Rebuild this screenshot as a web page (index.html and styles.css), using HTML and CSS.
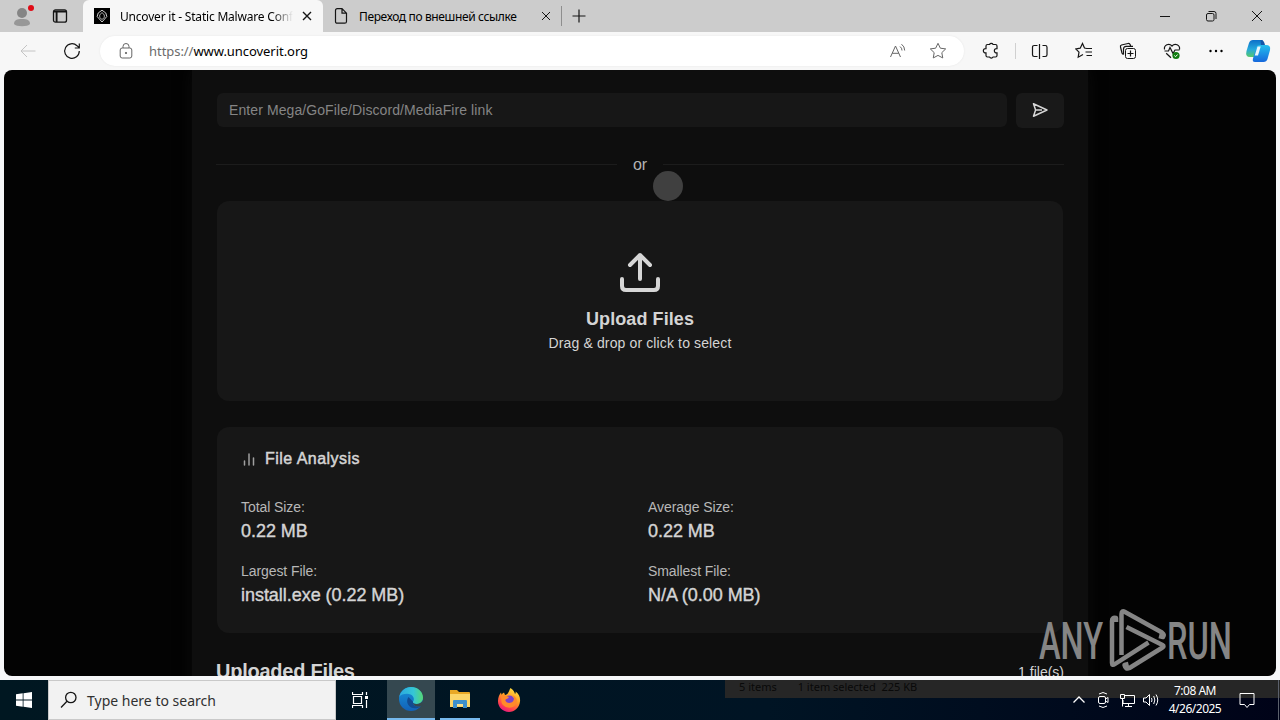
FILE: index.html
```
<!DOCTYPE html>
<html lang="en">
<head>
    <meta charset="UTF-8">
    <meta name="viewport" content="width=device-width, initial-scale=1.0">
    <title>Uncover it - Static Malware Config</title>
    <link rel="stylesheet" href="styles.css">
</head>
<body>
    <!-- browser tabs -->
    <div class="tabbar">
        <div class="tab-tools">
            <svg class="avatar" width="24" height="28" viewBox="0 0 24 28">
                <circle cx="11" cy="13" r="5" fill="#858585"/>
                <path d="M3 24c0-4 3-5 8-5s8 1 8 5c-2 3-14 3-16 0z" fill="#979797"/>
                <circle cx="20" cy="8" r="3" fill="#e00b16"/>
            </svg>
            <svg width="16" height="16" viewBox="0 0 16 16" class="line">
                <rect x="1.500" y="1.800" width="13" height="12.400" rx="2" stroke-width="1.300"/>
                <path d="M2 3.500h12M4.600 4v10" stroke-width="1.900"/>
            </svg>
        </div>
        <div class="tab active">
            <svg width="16" height="16" viewBox="0 0 16 16">
                <rect width="16" height="16" fill="#000"/>
                <path d="M8 2.200L11.800 5l1 3.500L8 14 3.200 8.500 4.200 5z" fill="none" stroke="#ccc"/>
                <path d="M8 4.500l2.300 2.500v2.500L8 11.500 5.700 9.500V7z" fill="none" stroke="#aaa"/>
            </svg>
            <span class="tab-title">Uncover it - Static Malware Config</span>
            <svg width="10" height="10" viewBox="0 0 10 10" class="line"><path d="M1 1l8 8M9 1L1 9" stroke-width="1.400"/></svg>
        </div>
        <div class="tab">
            <svg width="14" height="16" viewBox="0 0 14 16" class="line"><path d="M1.500 2.500q0-1.800 1.800-1.800H8l4.500 4.500v8.200q0 1.800-1.800 1.800H3.300q-1.800 0-1.800-1.800zM8 .7v4.500h4.500" stroke-width="1.200"/></svg>
            <span class="tab-title cyr">Переход по внешней ссылке</span>
            <svg width="10" height="10" viewBox="0 0 10 10" class="line"><path d="M1 1l8 8M9 1L1 9"/></svg>
        </div>
        <div class="new-tab">
            <svg width="14" height="14" viewBox="0 0 14 14" class="line"><path d="M7 .5v13M.5 7h13" stroke-width="1.200"/></svg>
        </div>
        <div class="win-buttons">
            <svg width="46" height="32" viewBox="0 0 46 32" class="line"><path d="M18 16.500h10"/></svg>
            <svg width="46" height="32" viewBox="0 0 46 32" class="line"><rect x="18.500" y="13.500" width="7.500" height="7.500" rx="1.500"/><path d="M20.500 11.500h5.500q2 0 2 2v5.500"/></svg>
            <svg width="46" height="32" viewBox="0 0 46 32" class="line"><path d="M18 11l10 10M28 11L18 21"/></svg>
        </div>
    </div>

    <!-- address bar -->
    <div class="toolbar">
        <div class="nav">
            <svg width="16" height="16" viewBox="0 0 16 16" class="line faded"><path d="M15.500 8H1M7 2L1 8l6 6"/></svg>
            <svg width="18" height="18" viewBox="0 0 18 18" class="line"><path d="M16.300 9a7.300 7.300 0 1 1-2.300-5.300l2 2M16.300 1.500v4.500h-4.500" stroke-width="1.200"/></svg>
        </div>
        <div class="address">
            <svg width="14" height="16" viewBox="0 0 14 16" class="line grey"><rect x="1.200" y="5" width="11.600" height="10" rx="2"/><path d="M4 5V3.500a3 3 0 0 1 6 0V5"/><circle cx="7" cy="10" r=".7" fill="#666"/></svg>
            <span class="url"><span class="scheme">https://</span>www.uncoverit.org</span>
            <svg width="18" height="16" viewBox="0 0 18 16" class="line grey"><path d="M1.500 14L6.500 3l5 11M3.200 10.300h6.600M11 3.500q2 1.500 2 4M12.500 1.200q3.200 2.300 3.200 6.300"/></svg>
            <svg width="18" height="18" viewBox="0 0 18 18" class="line grey star"><path d="M9 1.300l2.350 4.900 5.350.7-3.900 3.750.95 5.300L9 13.400l-4.750 2.550.95-5.300L1.300 6.900l5.350-.7z"/></svg>
        </div>
        <div class="actions">
            <svg class="puzzle" width="18" height="18" viewBox="0 0 18 18" class="line"><path d="M5.500 2.500h2a2 2 0 0 1 3.600 0h2.400q1.500 0 1.500 1.500v2.600a2.200 2.200 0 1 0 0 4.300v2.600q0 1.500-1.500 1.500h-2.400a2 2 0 0 1-3.600 0h-2Q4 15 4 13.500v-2.600a2.200 2.200 0 1 1 0-4.300V4q0-1.500 1.500-1.500z"/></svg>
            <span class="separator"></span>
            <svg width="18" height="18" viewBox="0 0 18 18" class="line"><path d="M6.500 3.500H3.200q-1.700 0-1.700 1.700v7.600q0 1.700 1.700 1.700h3.300M8.500 2v15M11.500 3.500h2.800q1.700 0 1.700 1.700v7.600q0 1.700-1.700 1.700h-2.800" stroke-width="1.200"/></svg>
            <svg width="18" height="18" viewBox="0 0 18 18" class="line"><path d="M11.800 6.500L9.500 6 7.500 1.500 5.200 6.200l-4.400.7L4 10.200l-.8 5L8 12.500M11.500 6.500h5.500M10.500 10H17M11.500 13.500H17" stroke-width="1.200"/></svg>
            <svg width="18" height="18" viewBox="0 0 18 18" class="line"><rect x="6.500" y="6.500" width="10" height="10" rx="2"/><path d="M4.500 12.500Q3.300 12 3 11L1.500 5Q1 3.500 2.500 3L9 1.500q1.600-.3 2.200 1.200l.6 1.700M4.500 12.500V7q0-2.600 2.600-2.600H14M11.500 8.500v6M8.500 11.500h6" stroke-width="1.200"/></svg>
            <svg width="18" height="18" viewBox="0 0 18 18" class="line"><path d="M1.500 7.500C.7 3 6 .5 9 4c3-3.500 8.300-1 7.500 3.500M1.500 9h4l1.500-3.500 3 6L12 8h4.500M3.200 11.200L8 15.800" stroke-width="1.200"/><circle cx="13" cy="13.500" r="3.600" fill="#107c10" stroke="none"/><path d="M11.300 13.500l1.300 1.200 2-2.200" stroke="#fff"/></svg>
            <svg width="18" height="18" viewBox="0 0 18 18"><circle cx="3.500" cy="9" r="1.200"/><circle cx="9" cy="9" r="1.200"/><circle cx="14.500" cy="9" r="1.200"/></svg>
        </div>
        <svg class="copilot" width="26" height="24" viewBox="0 0 26 24">
            <defs>
                <linearGradient id="cop1" x1="0" y1="0" x2="0" y2="1"><stop offset="0" stop-color="#0c6fc9"/><stop offset=".55" stop-color="#26a9dc"/><stop offset="1" stop-color="#56c96b"/></linearGradient>
                <linearGradient id="cop2" x1="0" y1="0" x2="0" y2="1"><stop offset="0" stop-color="#22bfee"/><stop offset="1" stop-color="#1668dc"/></linearGradient>
            </defs>
            <path d="M8 1h8.500Q19 1 18 4l-3.500 11q-1 3-4 3H5Q0 18 1.500 12L4 4q1-3 4-3z" fill="url(#cop1)"/>
            <path d="M15 6h6q5 0 4 5l-2.500 9q-1 3-4 3H10q-3 0-2-3.500L11 9q1-3 4-3z" fill="url(#cop2)"/>
            <path d="M12.500 7.500h3.200L13 16.500H9.700z" fill="#e9f5fb"/>
            <path d="M15.500 1Q19 1 20 6h-4z" fill="#1256a8"/>
        </svg>
    </div>

    <!-- web page -->
    <div class="viewport">
        <div class="container">
            <div class="link-row">
                <input class="link-input" type="text" placeholder="Enter Mega/GoFile/Discord/MediaFire link">
                <button class="send">
                    <svg width="16" height="16" viewBox="0 0 16 16"><path d="M1.500 1.800L15 8 1.500 14.200 3.600 8zM3.600 8H10" fill="none" stroke="#d6d6d6" stroke-width="1.500" stroke-linejoin="round"/></svg>
                </button>
            </div>

            <div class="or">or</div>

            <div class="upload">
                <svg width="48" height="48" viewBox="0 0 48 48"><path d="M24 30V6M14 16L24 6l10 10M6 30v7q0 4 4 4h28q4 0 4-4v-7" fill="none" stroke="#d6d6d6" stroke-width="4" stroke-linecap="round" stroke-linejoin="round"/></svg>
                <div class="upload-title">Upload Files</div>
                <div class="upload-hint">Drag &amp; drop or click to select</div>
            </div>

            <div class="analysis">
                <div class="analysis-title">
                    <svg width="16" height="16" viewBox="0 0 16 16"><path d="M3.500 14V10M8 14V3M12.500 14V7" stroke="#a0a0a0" stroke-width="1.500" stroke-linecap="round"/></svg>
                    File Analysis
                </div>
                <div class="stats">
                    <div><div class="label">Total Size:</div><div class="value">0.22 MB</div></div>
                    <div><div class="label">Average Size:</div><div class="value">0.22 MB</div></div>
                    <div><div class="label">Largest File:</div><div class="value">install.exe (0.22 MB)</div></div>
                    <div><div class="label">Smallest File:</div><div class="value">N/A (0.00 MB)</div></div>
                </div>
            </div>

            <div class="files-head">
                <span class="files-title">Uploaded Files</span>
                <span class="files-count">1 file(s)</span>
            </div>
        </div>
    </div>

    <!-- windows taskbar -->
    <div class="taskbar">
        <div class="start">
            <svg width="16" height="16" viewBox="0 0 16 16"><path d="M0 2.300L6.700 1.300V7.600H0zM7.500 1.200L16 0v7.600H7.500zM0 8.400h6.700v6.300L0 13.700zM7.500 8.400H16V16l-8.500-1.200z" fill="#fff"/></svg>
        </div>
        <div class="search">
            <svg width="18" height="18" viewBox="0 0 18 18" class="line"><circle cx="10.800" cy="6.500" r="5.200" stroke-width="1.300"/><path d="M7 10.300L1 16.500" stroke-width="1.300"/></svg>
            <span>Type here to search</span>
        </div>
        <div class="task-view">
            <svg width="16" height="16" viewBox="0 0 16 16" class="line white"><path d="M.5 0v2.500h10V0M.5 16v-2.500h10V16M1.500 4.500h8v7h-8zM14.500 0v3M14.500 8v8" stroke-width="1.200"/><path d="M13 5.500h3" stroke-width="3"/></svg>
        </div>
        <div class="app current">
            <svg width="24" height="24" viewBox="0 0 24 24">
                <defs>
                    <linearGradient id="edge1" x1="0" y1="0" x2="1" y2="0"><stop offset="0" stop-color="#2ba8e0"/><stop offset=".6" stop-color="#35c6d6"/><stop offset="1" stop-color="#56d774"/></linearGradient>
                    <linearGradient id="edge2" x1="0" y1="0" x2="0" y2="1"><stop offset="0" stop-color="#1793d9"/><stop offset="1" stop-color="#1261b8"/></linearGradient>
                </defs>
                <circle cx="12" cy="12" r="12" fill="url(#edge2)"/>
                <path d="M.2 10C1.500 4 6.500 0 12 0c7 0 12 5 12 10.500 0 4-3 6.500-6.500 6.500-2.500 0-4-1-3.500-2.200 2.500-3.500-.5-8-6-8C4.500 6.800 1.500 8 .2 10z" fill="url(#edge1)"/>
                <path d="M9.500 10c-4 6 1.500 12 7.500 11.300 2-.2 4-1.300 5.300-2.600-4 1.800-8.800.8-8.300-3.900z" fill="#124b91"/>
                <path d="M14 14.800c-.5 1.300 1 2.300 3.500 2.200 3 0 5.500-1.500 6.300-4v5l-1.500 1c-3 1.300-8.800.5-8.300-4.200z" fill="#37474d"/>
            </svg>
        </div>
        <div class="app opened">
            <svg width="22" height="20" viewBox="0 0 22 20">
                <path d="M1 1h7l2 2h10q1 0 1 1v14H1z" fill="#e8a825"/>
                <path d="M1 5h20v13H1z" fill="#fbd568"/>
                <path d="M4 19v-7q0-1 1-1h12q1 0 1 1v7h-4v-4H8v4z" fill="#3c8fcb"/>
                <path d="M8 15h6v2H8z" fill="#fae08e"/>
            </svg>
        </div>
        <div class="app">
            <svg width="24" height="24" viewBox="0 0 24 24">
                <defs><linearGradient id="fox" x1=".8" y1="0" x2=".3" y2="1"><stop offset="0" stop-color="#ffe843"/><stop offset=".45" stop-color="#ff9a24"/><stop offset=".8" stop-color="#ff3d50"/><stop offset="1" stop-color="#e21883"/></linearGradient></defs>
                <path d="M13.500 0c3 2 4 4 4.500 6 .8-.5.8-1.500.6-2.500C22 6 23.500 9.500 23 13.500 22.400 19.500 17.500 24 12 24 5.500 24 .8 19 1 13c.1-3.500 1.200-6.500 3-8.500l.6 2.300C5.500 5.500 6 5 7 4.500L8 7c3.500-.5 3.800-4 5.500-7z" fill="url(#fox)"/>
                <circle cx="12.500" cy="12.500" r="5" fill="#7b42c9"/>
                <path d="M4 7c3 0 5 1 8 2-1 2-3 1.700-3.700 3 .5 3 5 4 7.500 1.500 2-2 1-5-.8-6.500 5 1.500 6 6.500 3.500 10-4 4.500-12 3-14-2.500z" fill="#ff8a2a"/>
            </svg>
        </div>
        <div class="ghost"><span>5 items</span><span>1 item selected&nbsp; 225 KB</span></div>
        <div class="tray">
            <svg width="24" height="20" viewBox="0 0 24 20" class="line white"><path d="M6.500 12.500L12 7l5.500 5.500" stroke-width="1.300"/></svg>
            <svg width="24" height="20" viewBox="0 0 24 20" class="line white"><rect x="7.500" y="6.500" width="7" height="7" rx="1.500"/><path d="M14.500 9l2.500-1.500v5L14.500 11M8 4q4-3 8 0M8 16q4 3 8 0"/></svg>
            <svg width="24" height="20" viewBox="0 0 24 20" class="line white"><path d="M9 5.500h10.500v8H8V10M13.500 13.500v3M10 16.500h7M5.500 4.500h4v4h-4zM7.500 8.500v8"/></svg>
            <svg width="24" height="20" viewBox="0 0 24 20" class="line white"><path d="M4.500 8h2.500l3.500-3.500v11L7 12H4.500zM12.500 8q1 2 0 4M14.700 6q2.300 4 0 8M17 4.500q3.500 5.500 0 11"/></svg>
            <div class="clock"><span>7:08 AM</span><span>4/26/2025</span></div>
            <svg width="24" height="20" viewBox="0 0 24 20" class="line white notice"><path d="M5 3.500h14v11h-4.500L12 17.500l-2.500-3H5z"/></svg>
        </div>
    </div>

    <!-- watermark over the desktop -->
    <svg class="watermark" width="198" height="66" viewBox="0 0 198 66">
        <text x="3" y="51" textLength="64" lengthAdjust="spacingAndGlyphs">ANY</text>
        <text x="131" y="51" textLength="65" lengthAdjust="spacingAndGlyphs">RUN</text>
        <path d="M78.500 14v-4q-4-1-4 3v42q0 3 3 1l33.500-21.500M84 47V6q0-4 3.500-2l37 20.500q3 2 1 4.500l-4-1M89 19l36 18q2 1 0 2.500l-33 20.500q-4 2-5-3l4-1" transform="translate(1.500 0)" fill="none" stroke="#858585" stroke-width="4.500" stroke-linejoin="round"/>
    </svg>
    <div class="pointer"></div>
</body>
</html>
```
FILE: styles.css
```
* {
    box-sizing: border-box;
}

html,body {
    margin: 0;
    width: 1280px;
    height: 720px;
    overflow: hidden;
    background-color: #f6f7f9;
    font-family: "Noto Sans", "Open Sans", sans-serif;
    font-size: 12px;
    color: #000;
}

svg {
    display: block;
    flex: none;
}

.line,
.puzzle {
    fill: none;
    stroke: #151515;
}

.puzzle {
    stroke-width: 1.2;
}

.grey {
    stroke: #666;
}

.faded {
    stroke: #c4c4c4;
}

.white {
    stroke: #fff;
}

/* tabs */
.tabbar {
    display: flex;
    height: 32px;
    background-color: #cccccc;
}

.tab-tools {
    display: flex;
    align-items: center;
    width: 83px;
    padding-left: 11px;
    gap: 17px;
}

.avatar {
    margin-top: -4px;
}

.tab {
    display: flex;
    align-items: center;
    width: 238px;
    padding: 0 10px 0 11px;
}

.tab.active {
    width: 240px;
    padding-right: 11px;
    background-color: #f7f7f7;
    border-radius: 6px 6px 0 0;
}

.tab-title {
    flex: 1;
    margin-left: 10px;
    margin-right: 9px;
    overflow: hidden;
    white-space: nowrap;
    letter-spacing: -0.2px;
}

.active .tab-title {
    -webkit-mask-image: linear-gradient(90deg, #000 88%, transparent);
}

.tab-title.cyr {
    margin-left: 11px;
    letter-spacing: -0.36px;
}

.new-tab {
    display: flex;
    align-items: center;
    height: 20px;
    margin-top: 6px;
    padding-left: 10px;
    border-left: 1px solid #8e8e8e;
}

.win-buttons {
    display: flex;
    margin-left: auto;
}

/* toolbar */
.toolbar {
    display: flex;
    align-items: center;
    height: 38px;
    padding-right: 9px;
    background-color: #f7f7f7;
}

.nav {
    display: flex;
    align-items: center;
    width: 100px;
    padding-left: 20px;
    gap: 27px;
}

.address {
    display: flex;
    align-items: center;
    width: 864px;
    height: 30px;
    padding: 0 17px 0 19px;
    background-color: #fff;
    border-radius: 15px;
    box-shadow: 0 0 2px #e4e4e4;
}

.url {
    flex: 1;
    margin-left: 16px;
    font-size: 13px;
    letter-spacing: -0.05px;
}

.scheme {
    color: #6b6b6b;
}

.star {
    margin-left: 22px;
}

.actions {
    display: flex;
    align-items: center;
    gap: 26px;
    margin-left: 18px;
}

.separator {
    width: 1px;
    height: 16px;
    margin: 0 -11px 0 -11px;
    background-color: #d0d0d0;
}

.copilot {
    margin-left: auto;
}

/* page */
.viewport {
    height: 606px;
    margin: 0 4px;
    overflow: hidden;
    border-radius: 8px;
    background-color: #030303;
    font-family: "Liberation Sans", Arial, sans-serif;
    font-size: 14px;
    color: #d4d4d4;
}

.container {
    width: 896px;
    height: 660px;
    margin: 0 auto;
    padding: 23px 24px;
    background-color: #0e0e0e;
    box-shadow: 0 0 14px #0b0b0b;
}

.link-row {
    display: flex;
    gap: 9px;
    height: 35px;
}

.link-input {
    flex: 1;
    height: 34px;
    margin-left: 1px;
    padding: 0 12px;
    border: none;
    border-radius: 6px;
    outline: none;
    background-color: #171717;
    font: 14px "Liberation Sans", Arial, sans-serif;
    letter-spacing: 0.09px;
}

.link-input::placeholder {
    color: #858585;
}

.send {
    display: flex;
    align-items: center;
    justify-content: center;
    width: 48px;
    padding: 0 0 1px;
    border: none;
    border-radius: 6px;
    background-color: #191919;
}

.or {
    display: flex;
    align-items: center;
    gap: 16px;
    height: 19px;
    margin: 27px 0;
    font-size: 16px;
    color: #b4b4b4;
}

.or::before,
.or::after {
    content: "";
    flex: 1;
    height: 1px;
    margin-bottom: 1px;
    background-color: #1c1c1c;
}

.upload {
    display: flex;
    flex-direction: column;
    align-items: center;
    height: 200px;
    margin: 0 1px;
    padding-top: 48px;
    border-radius: 12px;
    background-color: #171717;
}

.upload-title {
    margin-top: 9px;
    font-size: 18px;
    font-weight: bold;
    line-height: 26px;
    letter-spacing: 0.08px;
}

.upload-hint {
    line-height: 22px;
    letter-spacing: 0.13px;
}

.analysis {
    height: 206px;
    margin: 26px 1px 0;
    padding: 20px 24px;
    border-radius: 12px;
    background-color: #171717;
}

.analysis-title {
    display: flex;
    align-items: center;
    gap: 8px;
    height: 24px;
    font-size: 16px;
    letter-spacing: 0.47px;
    -webkit-text-stroke: 0.5px #d4d4d4;
}

.stats {
    display: grid;
    grid-template-columns: 1fr 1fr;
    gap: 16px;
    margin-top: 24px;
}

.label {
    height: 24px;
    line-height: 24px;
    letter-spacing: -0.08px;
    color: #b8b8b8;
}

.value {
    height: 24px;
    line-height: 24px;
    font-size: 18px;
    letter-spacing: -0.04px;
    -webkit-text-stroke: 0.4px #d4d4d4;
}

.files-head {
    display: flex;
    justify-content: space-between;
    margin-top: 26px;
    line-height: 26px;
}

.files-title {
    margin-top: -1px;
    font-size: 20px;
    font-weight: bold;
    letter-spacing: -0.25px;
}

/* taskbar */
.taskbar {
    display: flex;
    height: 40px;
    margin-top: 4px;
    background: linear-gradient(90deg, #001721, #001424 60%, #000318);
}

.start {
    display: flex;
    align-items: center;
    justify-content: center;
    width: 48px;
}

.search {
    display: flex;
    align-items: center;
    gap: 9px;
    width: 288px;
    padding-left: 11px;
    border: 1px solid #c9c9c9;
    background-color: #f2f2f2;
    font-size: 14px;
    color: #303030;
}

.task-view {
    display: flex;
    align-items: center;
    justify-content: center;
    width: 51px;
    padding-right: 3px;
}

.app {
    display: flex;
    align-items: center;
    justify-content: center;
    width: 49px;
}

.app.current {
    width: 48px;
    border-bottom: 2px solid #76b9ed;
    background-color: #354850;
}

.app.opened {
    width: 40px;
    margin: 0 4px 0 5px;
    border-bottom: 2px solid #76b9ed;
}

.ghost {
    display: flex;
    gap: 21px;
    width: 555px;
    height: 18px;
    margin-left: 192px;
    padding-left: 14px;
    background-color: #262626;
    color: #090909;
    font-size: 11px;
    line-height: 14px;
    white-space: nowrap;
}

.tray {
    position: absolute;
    right: 0;
    bottom: 0;
    display: flex;
    align-items: center;
    width: 213px;
    height: 40px;
    color: #fff;
}

.clock {
    display: flex;
    flex-direction: column;
    align-items: center;
    width: 64px;
    line-height: 18px;
    font-size: 12px;
    letter-spacing: -0.5px;
}

.notice {
    margin-left: 8px;
}

.tray::after {
    content: "";
    width: 1px;
    height: 40px;
    margin-left: 19px;
    background-color: #5b606b;
}

/* overlays */
.watermark {
    position: absolute;
    left: 1036px;
    top: 608px;
    font-family: Roboto, sans-serif;
    font-size: 52px;
    font-weight: 500;
    fill: #858585;
}

.pointer {
    position: absolute;
    left: 653px;
    top: 171px;
    width: 30px;
    height: 30px;
    border-radius: 50%;
    background-color: #404040;
}
```
